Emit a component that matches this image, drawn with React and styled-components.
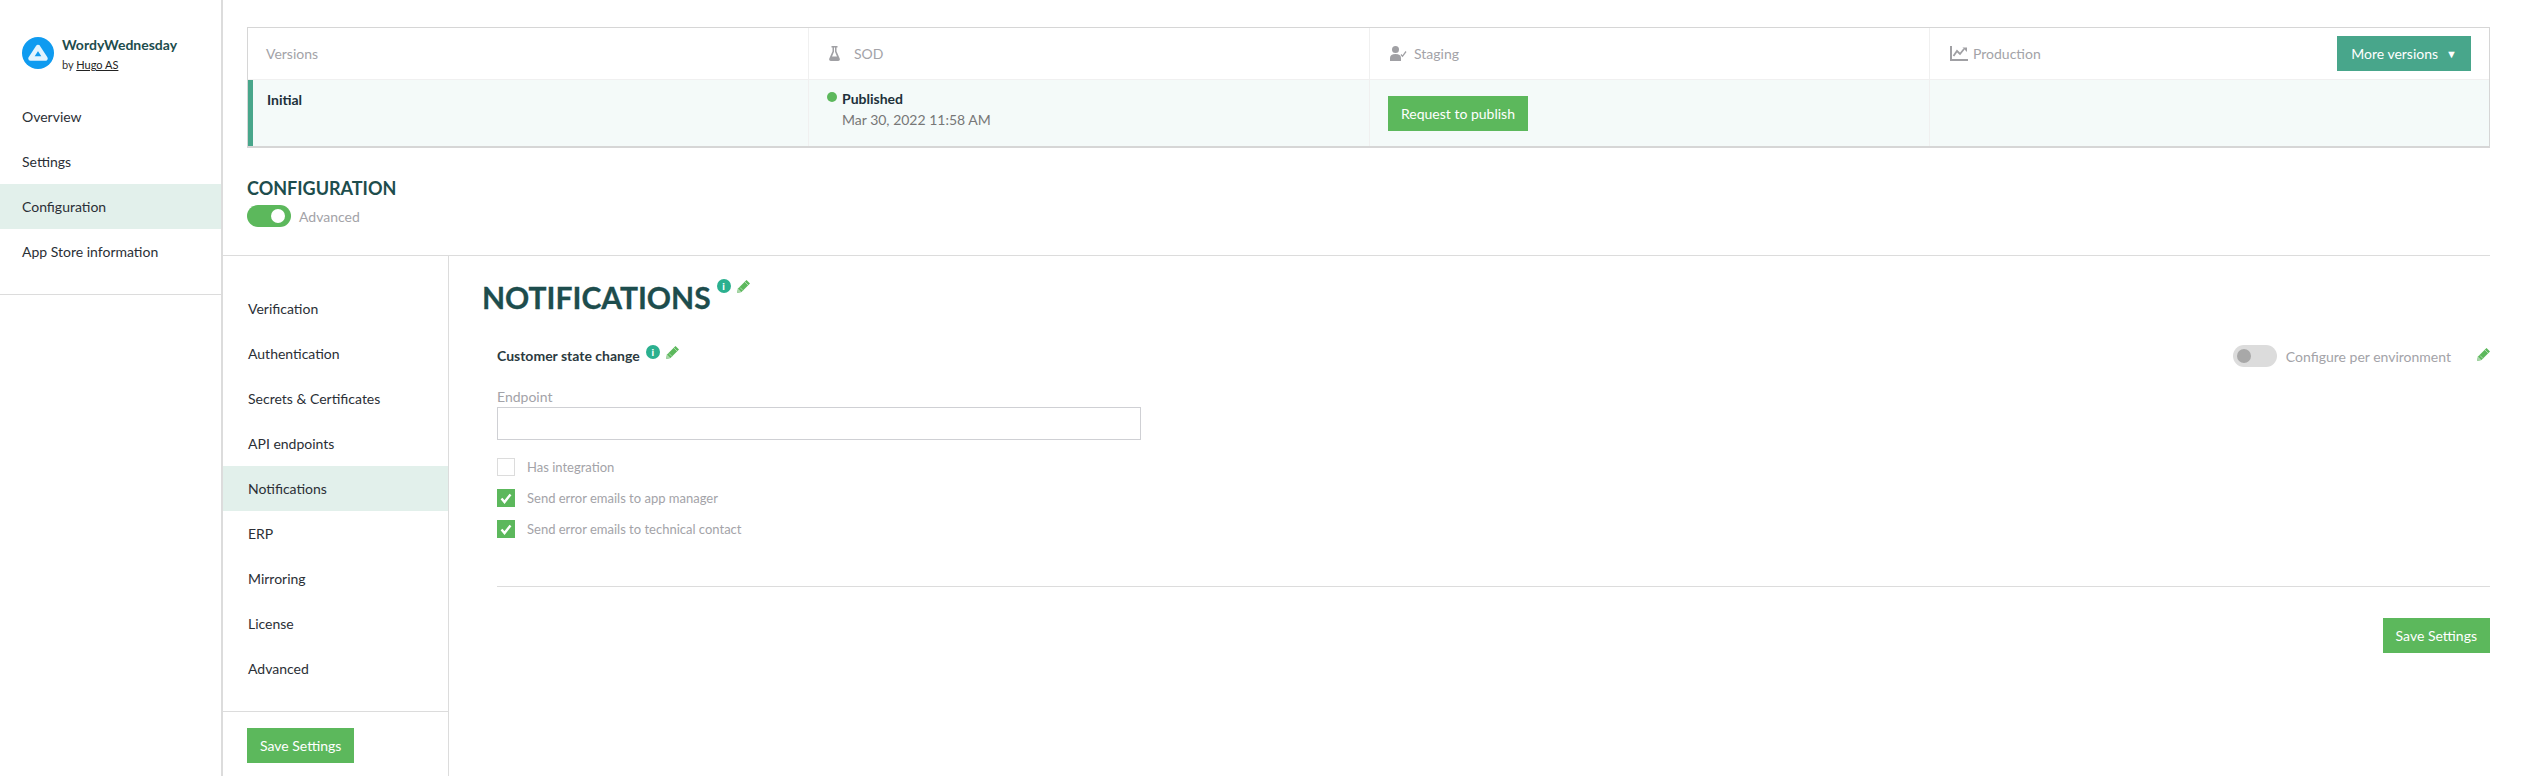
import React from "react";
import styled, { createGlobalStyle } from "styled-components";

const GlobalStyle = createGlobalStyle`
  html, body {
    margin: 0;
    padding: 0;
    background: #fff;
    font-family: Lato, "Open Sans", sans-serif;
    font-size: 14px;
    overflow: hidden;
  }
  * { box-sizing: border-box; }
`;

const Page = styled.div`
  display: flex;
  height: 776px;
  width: 2540px;
  overflow: hidden;
`;

const Sidebar = styled.aside`
  width: 223px;
  flex: none;
  border-right: 2px solid #dcdcdc;
`;

const SideTop = styled.div`
  height: 295px;
  padding-top: 37px;
  border-bottom: 1px solid #dcdcdc;
`;

const Brand = styled.div`
  display: flex;
  gap: 8px;
  padding-left: 22px;
  height: 57px;
`;

const BrandText = styled.div`
  display: flex;
  flex-direction: column;
  padding-top: 2px;
`;

const BrandName = styled.div`
  font-size: 14px;
  line-height: 12px;
  font-weight: 700;
  color: #1d4d4d;
`;

const BrandBy = styled.div`
  margin-top: 7px;
  font-size: 11px;
  line-height: 13px;
  color: #333;

  a {
    color: #222;
    text-decoration: underline;
  }
`;

const NavItem = styled.div`
  height: 45px;
  display: flex;
  align-items: center;
  padding-left: ${(p) => p.$indent}px;
  font-size: 14px;
  color: #2b2f36;
  background: ${(p) => (p.$active ? "#e2f0eb" : "transparent")};
`;

const Main = styled.main`
  flex: 1;
  min-width: 0;
  padding-top: 27px;
`;

const Versions = styled.section`
  margin: 0 50px 0 24px;
  height: 121px;
  border: 1px solid #d6d6d6;
  border-bottom-width: 2px;
  display: flex;
  flex-direction: column;
`;

const VersionsRow = styled.div`
  display: grid;
  grid-template-columns: 560px 561px 560px 1fr;
  height: ${(p) => (p.$body ? 67 : 51)}px;
  background: ${(p) => (p.$body ? "#f4faf9" : "#fff")};
  border-top: ${(p) => (p.$body ? "1px solid #f0f0f0" : "none")};
`;

const Cell = styled.div`
  position: relative;
  display: flex;
  border-left: ${(p) => (p.$first ? "none" : "1px solid #f0f0f0")};
`;

const HeadCell = styled(Cell)`
  align-items: center;
  padding-left: ${(p) => (p.$first ? 18 : 20)}px;
  padding-right: 18px;
  color: #a3a3a8;
  font-size: 14px;
  gap: ${(p) => p.$gap || 7}px;
`;

const InitialCell = styled(Cell)`
  border-left: 5px solid #48a68b;
  padding: 11px 0 0 14px;
  font-size: 14px;
  font-weight: 700;
  color: #20303a;
  line-height: 17px;
`;

const StatusCell = styled(Cell)`
  flex-direction: column;
  padding: 10px 0 0 33px;
  line-height: 17px;
`;

const ButtonCell = styled(Cell)`
  padding: 16px 0 0 18px;
`;

const Dot = styled.span`
  position: absolute;
  left: 18px;
  top: 12px;
  width: 10px;
  height: 10px;
  border-radius: 50%;
  background: #5cb85c;
`;

const Status = styled.div`
  font-weight: 700;
  color: #20303a;
`;

const StatusDate = styled.div`
  margin-top: 4px;
  color: #777;
  font-weight: 400;
`;

const Button = styled.button`
  border: none;
  border-radius: 0;
  height: 35px;
  padding: 0 ${(p) => p.$pad || 13}px;
  background: ${(p) => (p.$teal ? "#48a68b" : "#5cb85c")};
  color: #fff;
  font-family: inherit;
  font-size: 14px;
  white-space: nowrap;
`;

const MoreButton = styled(Button)`
  margin-left: auto;
  display: flex;
  align-items: center;
  gap: 8px;
`;

const Arrow = styled.span`
  font-size: 11px;
`;

const ConfigHead = styled.div`
  height: 108px;
  padding: 29px 0 0 24px;
  border-bottom: 1px solid #dcdcdc;
  margin-right: 50px;
`;

const ConfigTitle = styled.h2`
  margin: 0 0 6px;
  font-size: 18px;
  line-height: 22px;
  font-weight: 700;
  color: #1d4d4d;
`;

const ToggleRow = styled.div`
  display: flex;
  align-items: center;
  gap: ${(p) => p.$gap || 8}px;
  color: #a3a3a8;
  font-size: 14px;
`;

const Toggle = styled.span`
  position: relative;
  display: inline-block;
  width: 44px;
  height: 22px;
  border-radius: 11px;
  background: ${(p) => (p.$on ? "#5cb85c" : "#dcdcdc")};

  &::after {
    content: "";
    position: absolute;
    top: 4px;
    left: ${(p) => (p.$on ? 24 : 4)}px;
    width: 14px;
    height: 14px;
    border-radius: 50%;
    background: ${(p) => (p.$on ? "#fff" : "#a8a8a8")};
  }
`;

const Split = styled.div`
  display: flex;
  height: 520px;
`;

const SubNav = styled.nav`
  width: 226px;
  flex: none;
  border-right: 1px solid #dcdcdc;
  display: flex;
  flex-direction: column;
`;

const SubNavList = styled.div`
  height: 456px;
  padding-top: 30px;
  border-bottom: 1px solid #dcdcdc;
`;

const SubNavFoot = styled.div`
  padding: 16px 0 0 24px;
`;

const Content = styled.div`
  flex: 1;
  min-width: 0;
  padding: 23px 50px 0 34px;
`;

const TitleRow = styled.div`
  display: flex;
  align-items: flex-start;
  gap: 6px;
  margin-left: -1px;
`;

const PageTitle = styled.h1`
  margin: 0;
  font-size: 30px;
  line-height: 36px;
  font-weight: 700;
  color: #1d4d4d;
  -webkit-text-stroke: 0.3px #1d4d4d;
`;

const Icons = styled.span`
  display: inline-flex;
  align-items: center;
  gap: 6px;
`;

const Info = styled.span`
  width: 14px;
  height: 14px;
  border-radius: 50%;
  background: #2bb08f;
  color: #fff;
  font-size: 10px;
  font-weight: 900;
  line-height: 14px;
  text-align: center;
`;

const Group = styled.div`
  padding: 30px 0 0 14px;
`;

const GroupHead = styled.div`
  display: flex;
  align-items: flex-start;
  height: 22px;
`;

const GroupTitle = styled.div`
  font-size: 14px;
  font-weight: 700;
  color: #2b3a40;
  line-height: 22px;
  margin-right: 6px;
`;

const PerEnv = styled(ToggleRow)`
  margin-left: auto;
`;

const EditEnd = styled.span`
  margin-left: 17px;
  margin-top: -3px;
  display: inline-flex;
`;

const FieldLabel = styled.label`
  display: block;
  margin-top: 21px;
  font-size: 14px;
  line-height: 17px;
  color: #a3a3a8;
`;

const TextInput = styled.input`
  display: block;
  width: 644px;
  height: 33px;
  margin-top: 2px;
  border: 1px solid #cfd0d4;
  border-radius: 0;
  outline: none;
  background: #fff;
`;

const Checks = styled.div`
  margin-top: 18px;
  display: flex;
  flex-direction: column;
  gap: 13px;
`;

const CheckRow = styled.div`
  display: flex;
  align-items: center;
  gap: 12px;
  height: 18px;
  font-size: 13px;
  color: #a3a3a8;
`;

const Box = styled.span`
  width: 18px;
  height: 18px;
  flex: none;
  display: flex;
  align-items: center;
  justify-content: center;
  background: ${(p) => (p.$checked ? "#5cb85c" : "#fff")};
  border: ${(p) => (p.$checked ? "none" : "1px solid #dcdcdc")};
`;

const Footer = styled.div`
  margin-top: 48px;
  padding-top: 31px;
  border-top: 1px solid #dcdcdc;
  display: flex;
  justify-content: flex-end;
`;

const Logo = () => (
  <svg width="32" height="32" viewBox="0 0 32 32" style={{ flex: "none" }}>
    <circle cx="16" cy="16" r="16" fill="#0f9bf0" />
    <path d="M16 10 L23.500 21.500 H8.500 Z" fill="none" stroke="#e3f4fe" strokeWidth="4.500" strokeLinejoin="round" />
  </svg>
);

const Flask = () => (
  <svg width="11" height="15" viewBox="0 0 11 15" fill="#a0a0a4">
    <path d="M2.500 0h6v1.500H7.500v3.800l3.200 7.200c.5 1.200-.2 2.500-1.500 2.500H1.800C.5 15-.2 13.700.3 12.500l3.200-7.200V1.500h-1V0zm2.500 1.500v4.200L3 10.500h5L6 5.700V1.500H5z" />
  </svg>
);

const UserCheck = () => (
  <svg width="17" height="15" viewBox="0 0 17 15" fill="#a0a0a4">
    <circle cx="5.500" cy="3.500" r="3.500" />
    <path d="M0 15v-3c0-2.500 2-4 5.500-4s5.500 1.500 5.500 4v3z" />
    <path d="M11 8.500l1.500 1.800L16 5.500" fill="none" stroke="#a0a0a4" strokeWidth="1.300" />
  </svg>
);

const ChartIcon = () => (
  <svg width="18" height="15" viewBox="0 0 18 15" fill="none" stroke="#a0a0a4">
    <path d="M1 0v14h17" strokeWidth="2" />
    <path d="M3.500 10L7 5l3 3 4-5" strokeWidth="1.800" />
    <path d="M12.500 1.500H17V6z" fill="#a0a0a4" stroke="none" />
  </svg>
);

const Pencil = () => (
  <svg width="13" height="13" viewBox="0 0 13 13">
    <path d="M9.500 0L13 3.500 4.500 12 0 13l1-4.500z" fill="#5cb85c" />
    <path d="M8 2l3 3M3 7.500l3 3" stroke="#bfe3bf" strokeWidth="0.800" />
    <path d="M1 8.500L4.500 12 0 13z" fill="#a9d6a9" />
  </svg>
);

const Check = () => (
  <svg width="12" height="11" viewBox="0 0 12 11" fill="none" stroke="#fff" strokeWidth="2.400">
    <path d="M1.500 5.500l3 3.500L10.500 1.500" />
  </svg>
);

const sideLinks = ["Overview", "Settings", "Configuration", "App Store information"];
const subLinks = [
  "Verification",
  "Authentication",
  "Secrets & Certificates",
  "API endpoints",
  "Notifications",
  "ERP",
  "Mirroring",
  "License",
  "Advanced",
];

export default function App() {
  return (
    <>
      <GlobalStyle />
      <Page>
        <Sidebar>
          <SideTop>
            <Brand>
              <Logo />
              <BrandText>
                <BrandName>WordyWednesday</BrandName>
                <BrandBy>
                  by <a>Hugo AS</a>
                </BrandBy>
              </BrandText>
            </Brand>
            {sideLinks.map((l) => (
              <NavItem key={l} $indent={22} $active={l === "Configuration"}>
                {l}
              </NavItem>
            ))}
          </SideTop>
        </Sidebar>
        <Main>
          <Versions>
            <VersionsRow>
              <HeadCell $first>Versions</HeadCell>
              <HeadCell $gap={14}>
                <Flask />
                SOD
              </HeadCell>
              <HeadCell>
                <UserCheck />
                Staging
              </HeadCell>
              <HeadCell $gap={5}>
                <ChartIcon />
                Production
                <MoreButton $teal $pad={14}>
                  More versions
                  <Arrow>▼</Arrow>
                </MoreButton>
              </HeadCell>
            </VersionsRow>
            <VersionsRow $body>
              <InitialCell $first>Initial</InitialCell>
              <StatusCell>
                <Dot />
                <Status>Published</Status>
                <StatusDate>Mar 30, 2022 11:58 AM</StatusDate>
              </StatusCell>
              <ButtonCell>
                <Button>Request to publish</Button>
              </ButtonCell>
              <Cell />
            </VersionsRow>
          </Versions>
          <ConfigHead>
            <ConfigTitle>CONFIGURATION</ConfigTitle>
            <ToggleRow>
              <Toggle $on />
              Advanced
            </ToggleRow>
          </ConfigHead>
          <Split>
            <SubNav>
              <SubNavList>
                {subLinks.map((l) => (
                  <NavItem key={l} $indent={25} $active={l === "Notifications"}>
                    {l}
                  </NavItem>
                ))}
              </SubNavList>
              <SubNavFoot>
                <Button>Save Settings</Button>
              </SubNavFoot>
            </SubNav>
            <Content>
              <TitleRow>
                <PageTitle>NOTIFICATIONS</PageTitle>
                <Icons>
                  <Info>i</Info>
                  <Pencil />
                </Icons>
              </TitleRow>
              <Group>
                <GroupHead>
                  <GroupTitle>Customer state change</GroupTitle>
                  <Icons>
                    <Info>i</Info>
                    <Pencil />
                  </Icons>
                  <PerEnv $gap={9}>
                    <Toggle />
                    Configure per environment
                    <EditEnd>
                      <Pencil />
                    </EditEnd>
                  </PerEnv>
                </GroupHead>
                <FieldLabel>Endpoint</FieldLabel>
                <TextInput />
                <Checks>
                  <CheckRow>
                    <Box />
                    Has integration
                  </CheckRow>
                  <CheckRow>
                    <Box $checked>
                      <Check />
                    </Box>
                    Send error emails to app manager
                  </CheckRow>
                  <CheckRow>
                    <Box $checked>
                      <Check />
                    </Box>
                    Send error emails to technical contact
                  </CheckRow>
                </Checks>
                <Footer>
                  <Button>Save Settings</Button>
                </Footer>
              </Group>
            </Content>
          </Split>
        </Main>
      </Page>
    </>
  );
}
